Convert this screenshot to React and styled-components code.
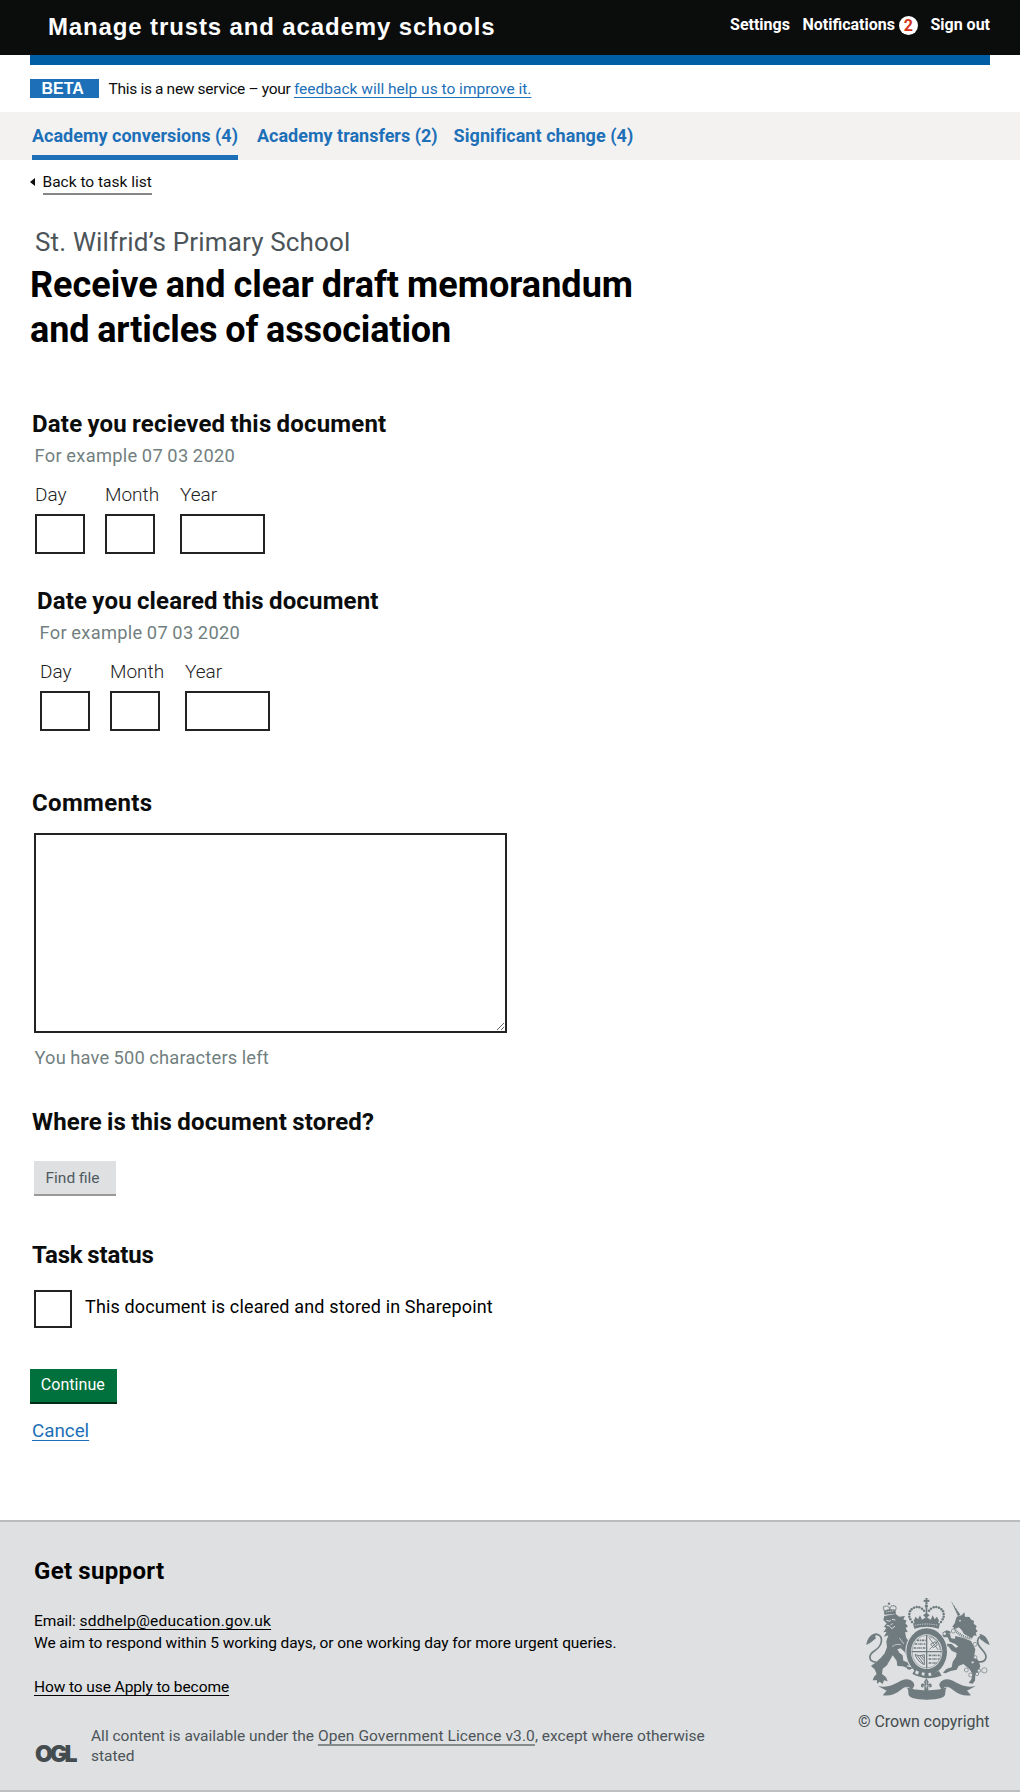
import React from 'react';
import styled, { createGlobalStyle, css } from 'styled-components';

const GlobalStyle = createGlobalStyle`
  *, *::before, *::after { box-sizing: border-box; }
  body { margin: 0; background: #fff; }
  h1, h2, p { margin: 0; }
`;

const Page = styled.div`
  width: 1020px;
  height: 1792px;
  display: flex;
  flex-direction: column;
  overflow: hidden;
  font-family: Roboto, "Liberation Sans", sans-serif;
  font-size: 15.5px;
  line-height: 20px;
  color: #0b0c0c;
`;

/* Header */
const Header = styled.header`
  display: flex;
  justify-content: space-between;
  align-items: flex-start;
  height: 55px;
  padding: 0 30px 0 48px;
  background: #0b0c0c;
  color: #fff;
`;

const ServiceName = styled.span`
  font: 700 24px/53px "Liberation Sans", Arial, sans-serif;
  letter-spacing: 0.87px;
  white-space: nowrap;
`;

const AccountNav = styled.nav`
  display: flex;
  align-items: center;
  gap: 12.5px;
  height: 50px;
  font-size: 16px;
  font-weight: 700;
`;

const AccountLink = styled.a`
  display: flex;
  align-items: center;
  gap: 4px;
`;

const Badge = styled.span`
  width: 19px;
  height: 19px;
  margin-top: 1px;
  border-radius: 50%;
  background: #fff;
  color: #d4351c;
  line-height: 20px;
  text-align: center;
`;

const BrandBar = styled.div`
  height: 10px;
  margin: 0 30px;
  background: #005ea5;
`;

/* Phase banner */
const PhaseBanner = styled.div`
  display: flex;
  align-items: flex-start;
  height: 47px;
  padding: 13.5px 30px 0;
  color: #0b0c0c;
`;

const PhaseTag = styled.strong`
  width: 69px;
  height: 19.5px;
  margin-right: 9.5px;
  padding-left: 11.5px;
  background: #1d70b8;
  color: #fff;
  font: 700 16px/20px "Liberation Sans", Arial, sans-serif;
`;

const PhaseText = styled.span`
  letter-spacing: -0.26px;
  word-spacing: -0.2px;
  white-space: pre;
`;

const TextLink = styled.a`
  color: ${p => p.$color || '#1d70b8'};
  letter-spacing: ${p => p.$track || 0}px;
  word-spacing: 0;
  text-decoration: underline;
  text-decoration-color: ${p => p.$line || 'currentColor'};
  text-decoration-thickness: ${p => p.$thick || 1}px;
  text-underline-offset: 3px;
  text-decoration-skip-ink: none;
`;

/* Section tabs */
const Tabs = styled.nav`
  display: flex;
  height: 48px;
  padding-left: 32px;
  background: #f3f2f1;
`;

const Tab = styled.a`
  height: 48px;
  margin-right: ${p => p.$gap || 0}px;
  color: #1d70b8;
  font-size: 18px;
  font-weight: 700;
  line-height: 47px;
  letter-spacing: ${p => p.$track || 0}px;
  ${p => p.$active && css`box-shadow: inset 0 -5px 0 #1d70b8;`}
`;

/* Main column */
const Main = styled.main`
  height: 1360px;
  padding: 11.5px 30px 0;
`;

const BackLink = styled.a`
  display: flex;
  align-items: flex-start;
  gap: 7.5px;
  width: max-content;

  svg { margin-top: 6.5px; }
  span {
    height: 23.5px;
    border-bottom: 2px solid #858688;
  }
`;

const Caption = styled.p`
  margin: 31px 0 5px 5px;
  color: #4c5458;
  font-size: 26px;
  line-height: 32px;
  letter-spacing: 0.16px;
`;

const Title = styled.h1`
  color: #000;
  font-size: 36px;
  line-height: 45px;
  letter-spacing: 0.02px;
  word-spacing: -1px;

  span { display: block; }
  span + span { letter-spacing: -0.12px; }
`;

const Section = styled.section`
  display: flex;
  flex-direction: column;
  align-items: flex-start;
  margin-top: ${p => p.$top}px;
  padding-left: ${p => p.$indent || 4}px;
`;

const Heading = styled.h2`
  margin-left: -2px;
  font-size: 24px;
  line-height: 30px;
  letter-spacing: ${p => p.$track || 0}px;
  word-spacing: -1px;
`;

const Hint = styled.p`
  margin: ${p => p.$top}px 0 0 0.5px;
  color: #727f80;
  font-size: 18.3px;
  line-height: 24px;
  letter-spacing: ${p => p.$track}px;
  word-spacing: -0.5px;
`;

const DateRow = styled.div`
  display: flex;
  padding-left: 1px;
  margin-top: 15.7px;
`;

const DateField = styled.label`
  display: flex;
  flex-direction: column;
  gap: 6.5px;
  width: ${p => p.$w}px;
  margin-right: ${p => p.$gap || 0}px;
  color: #222;
  font-size: 19px;
  font-weight: 300;
  line-height: 24px;
`;

const inputBox = css`
  appearance: none;
  display: block;
  margin: 0;
  padding: 0;
  border: 2px solid #222;
  border-radius: 0;
  background: #fff;
`;

const DateInput = styled.input`
  ${inputBox}
  width: 100%;
  height: 40px;
`;

const CommentBox = styled.textarea`
  ${inputBox}
  width: 473px;
  height: 200px;
  margin-top: 15.2px;
  resize: both;
`;

const Button = styled.button`
  appearance: none;
  display: flex;
  align-items: flex-start;
  width: ${p => p.$w}px;
  height: 35px;
  margin: ${p => p.$top}px 0 0;
  padding: ${p => p.$pad};
  border: 0;
  border-radius: 0;
  border-bottom: 2px solid ${p => (p.$primary ? '#002d18' : '#999')};
  background: ${p => (p.$primary ? '#00703c' : '#dee0e2')};
  color: ${p => (p.$primary ? '#fff' : '#505a5f')};
  font-family: inherit;
  font-size: ${p => (p.$primary ? 16 : 15.5)}px;
  line-height: 20px;
  letter-spacing: ${p => (p.$primary ? 0.05 : 0)}px;
`;

const CheckRow = styled.label`
  display: flex;
  gap: 13px;
  margin-top: 20.2px;
  color: #000;
  font-size: 18px;
  line-height: 33.6px;
  letter-spacing: 0.15px;
`;

const Checkbox = styled.input`
  ${inputBox}
  width: 38px;
  height: 38px;
`;

const Cancel = styled(TextLink)`
  display: inline-block;
  margin: 15.5px 0 0 2px;
  font-size: 18.8px;
  line-height: 24px;
`;

/* Footer */
const Footer = styled.footer`
  display: flex;
  justify-content: space-between;
  height: 272px;
  padding: 33.5px 26px 0 34px;
  border-top: 2px solid #b9bcbe;
  border-bottom: 2px solid #bcbec0;
  background: #dee0e2;
`;

const Support = styled.div`
  width: 700px;
  color: #000;
`;

const SupportHeading = styled.h2`
  margin: 0 0 24.2px;
  font-size: 24px;
  line-height: 30px;
  letter-spacing: 0.36px;
  word-spacing: -0.6px;
`;

const SupportLine = styled.p`
  line-height: 22px;
  letter-spacing: -0.07px;
  margin-bottom: ${p => p.$gap || 0}px;
`;

const Licence = styled.div`
  display: flex;
  gap: 14px;
  margin-top: 28.7px;
  color: #4c5458;
`;

const OglMark = styled.span`
  width: 43px;
  padding-top: 17.5px;
  padding-left: 1px;
  color: #454c4f;
  font: 900 23px/20px Inter, sans-serif;
  letter-spacing: -2.8px;
`;

const LicenceText = styled.div`
  width: 625px;
`;

const LicenceLine = styled.p`
  white-space: nowrap;
`;

const Copyright = styled.div`
  display: flex;
  flex-direction: column;
  width: 136px;
  padding-top: 38.5px;
  color: #454c4f;
  font-size: 16px;
  letter-spacing: -0.07px;

  svg { margin: 0 0 7.5px 4px; }
  span { white-space: nowrap; }
`;

const INK = '#6f7b7e';
const GROUND = '#dee0e2';

function RibbonHalf() {
  return (
    <>
      <path d="M48 276C78 284 98 270 120 259C140 250 158 262 157 275L148 290C142 274 132 276 116 288C98 302 82 307 62 304L74 290Z" />
      <path d="M133 279C144 285 170 289 195 289V317C158 317 142 310 140 303L138 286Z" />
    </>
  );
}

function Crest() {
  const crownDots = [
    [150, 84], [145, 76], [142, 68], [142, 60], [144, 52], [149, 46], [156, 41], [164, 39], [172, 40], [180, 44], [186, 50],
  ];
  return (
    <svg width="132" height="110" viewBox="0 0 396 330" fill={INK} aria-hidden="true">
      {/* central crown */}
      <path d="M190 12h7l-1 6 6-1v7l-6-1 1 7h-7l1-7-6 1v-7l6 1z" />
      <circle cx="193" cy="36" r="5" />
      {crownDots.map(([x, y]) => (
        <g key={`${x}-${y}`}>
          <circle cx={x} cy={y} r="3.8" />
          <circle cx={387 - x} cy={y} r="3.8" />
        </g>
      ))}
      <path d="M191 40h5v40h-5zM183 64l10-8 10 8-10 8zM155 80l6-12 7 8 6-12 6 13 13-8 13 8 6-13 6 12 7-8 6 12-3 8H158z" />
      <path d="M153 88q40-10 81 0l-4 16q-36-12-73 0z" />
      <path d="M159 94q35-8 69 0" fill="none" stroke={GROUND} strokeWidth="2.4" strokeDasharray="4 3" />
      {/* ribbon */}
      <RibbonHalf />
      <g transform="translate(389 0) scale(-1 1)"><RibbonHalf /></g>
      <path d="M193 252l7 12-3 8c8-8 15-2 11 7-5 3-7 0-8-2-2 4-2 7 0 9l-7 8-7-8c2-2 2-5 0-9-1 2-3 5-8 2-4-9 3-15 11-7l-3-8z" />
      <path d="M193 260v24M182 276h22" stroke={GROUND} strokeWidth="1.8" />
      {/* lion */}
      <path d="M67 62l-1-12q16-6 34-3l2 12z" />
      <path d="M67 50q-8-14 7-14 8 0 9 12 1-13 10-13 14 1 7 14" fill="none" stroke={INK} strokeWidth="3.5" strokeDasharray="4 1.5" />
      <path d="M72 54l24-4" fill="none" stroke={GROUND} strokeWidth="2.4" strokeDasharray="4 2" />
      <circle cx="81" cy="29" r="3.5" />
      <path d="M67 66L101 60L112 68L129 66L124 76L134 80L130 88L138 97L131 102L137 114L129 115L133 132L145 148L147 170L157 178L150 184L154 192L143 192L138 198L132 184L128 174L116 163L106 166L112 176L122 184L124 200L140 206L147 215L136 214L134 221L122 217L106 216L104 200L92 184L84 198L75 214L62 224L60 240L72 250L77 262L66 259L62 270L53 263L45 269L45 259L32 259L36 248L44 240L38 226L27 216L40 206L56 192L68 178L75 160L73 142L79 124L66 128L74 113L64 115L73 102L66 98L74 88L64 78Z" />
      <path d="M73 79l10 3 3-4M90 76l10 2M74 94l8 2 8 8 9-8M86 92l6-3" fill="none" stroke={GROUND} strokeWidth="3" />
      <path d="M90 158c11-8 19-8 28-5M78 206c8 12 5 25-9 28M112 132l14 18" fill="none" stroke={GROUND} strokeWidth="2.2" />
      <path d="M42 204C20 203 17 183 38 170C59 157 64 134 52 124C42 117 32 123 29 135" fill="none" stroke={INK} strokeWidth="5" />
      <path d="M13 153C15 136 26 117 45 119L39 126L42 133C34 139 29 146 13 153Z" />
      {/* unicorn */}
      <path d="M267 20L295 62L288 67Z" />
      <path d="M274 32l4-2M279 41l4-2M284 50l4-3" stroke={GROUND} strokeWidth="1.8" />
      <path d="M284 68L299 64L307 55L309 68L323 69L326 76L336 81L335 89L344 96L341 104L347 112L341 116L344 126L336 124L330 133L306 120L299 108L290 100L281 104L271 98L278 88Z" />
      <circle cx="294" cy="80" r="2.5" fill={GROUND} />
      <path d="M276 103q18 27 52 30" fill="none" stroke={INK} strokeWidth="8" strokeDasharray="3 3" />
      <path d="M280 126L304 132L327 141L340 166L337 184L350 202L355 216L349 234L340 244L339 260L332 269L320 267L329 254L330 238L323 226L304 210L290 216L284 227L266 231L250 238L243 236L253 225L269 220L272 204L282 188L284 177L269 170L259 157L248 160L252 149L269 150L281 161L289 158L280 150L263 143L257 130L245 130L240 124L252 116L264 120L267 132L278 135Z" />
      <path d="M240 117l14-8 10 3 3 6-17 2z" />
      <path d="M345 202C371 209 378 190 366 174C353 158 341 148 349 133C356 121 368 127 372 137" fill="none" stroke={INK} strokeWidth="5" />
      <path d="M383 153C379 138 369 121 352 120L356 127L353 134C362 139 368 147 383 153Z" />
      <g fill={GROUND} stroke={INK} strokeWidth="2">
        <circle cx="274" cy="111" r="6" />
        <circle cx="248" cy="119" r="5" />
        <circle cx="339" cy="151" r="6" />
        <circle cx="340" cy="190" r="5" />
        <circle cx="332" cy="205" r="4" />
        <circle cx="313" cy="228" r="6" />
        <circle cx="326" cy="243" r="6" />
        <circle cx="345" cy="240" r="5" />
        <circle cx="351" cy="230" r="5" />
        <circle cx="367" cy="229" r="8" />
      </g>
      {/* garter and shield */}
      <ellipse cx="194" cy="173" rx="64" ry="73" fill={GROUND} />
      <ellipse cx="194" cy="173" rx="61" ry="70" />
      <ellipse cx="194" cy="173" rx="47" ry="52" fill={GROUND} />
      <ellipse cx="194" cy="173" rx="44" ry="49" fill="none" stroke={INK} strokeWidth="1.5" />
      <path d="M194 123v100M149 173h90" stroke={INK} strokeWidth="4" />
      <g stroke={INK} strokeWidth="5" fill="none" strokeDasharray="7 2 3 2">
        <path d="M165 139h26M158 150h32M155 162h35M200 184h33M200 195h32M200 207h25" />
      </g>
      <path d="M200 130l29 38M230 139l-28 28M202 128c18 4 30 18 33 40M206 150l14-7 6 10-12 8z" fill="none" stroke={INK} strokeWidth="2.6" />
      <path d="M159 182q14 6 28 0v30q-18-6-28-30zM166 185l18 24M173 185l12 14M180 184l5 8" fill="none" stroke={INK} strokeWidth="3" />
      <path d="M159 226q36 25 72 5l8 14q-45 17-88-5z" />
      <path d="M162 229l9 4-4 9-8-4zM180 235l8 1-1 9-8-2zM199 237l8-1 1 9-8 1z" fill={GROUND} />
      <path d="M140 191l12 3-4 5 6 5-12 1zM133 217l20 4-9 6-9-2z" />
    </svg>
  );
}

function DateGroup({ name }) {
  return (
    <DateRow>
      <DateField $w={50} $gap={20}><span>Day</span><DateInput name={`${name}-day`} /></DateField>
      <DateField $w={50} $gap={25}><span>Month</span><DateInput name={`${name}-month`} /></DateField>
      <DateField $w={85}><span>Year</span><DateInput name={`${name}-year`} /></DateField>
    </DateRow>
  );
}

export default function App() {
  return (
    <Page>
      <GlobalStyle />
      <Header>
        <ServiceName>Manage trusts and academy schools</ServiceName>
        <AccountNav>
          <AccountLink>Settings</AccountLink>
          <AccountLink>Notifications <Badge>2</Badge></AccountLink>
          <AccountLink>Sign out</AccountLink>
        </AccountNav>
      </Header>
      <BrandBar />
      <PhaseBanner>
        <PhaseTag>BETA</PhaseTag>
        <PhaseText>
          {'This is a new service – your '}
          <TextLink>feedback will help us to improve it.</TextLink>
        </PhaseText>
      </PhaseBanner>
      <Tabs>
        <Tab $active $gap={19}>Academy conversions (4)</Tab>
        <Tab $gap={16}>Academy transfers (2)</Tab>
        <Tab $track={0.06}>Significant change (4)</Tab>
      </Tabs>

      <Main>
        <BackLink>
          <svg width="5" height="8" viewBox="0 0 5 8"><path d="M5 0v8L0 4z" fill="#0b0c0c" /></svg>
          <span>Back to task list</span>
        </BackLink>
        <Caption>St. Wilfrid’s Primary School</Caption>
        <Title>
          <span>Receive and clear draft memorandum</span>
          <span>and articles of association</span>
        </Title>

        <Section $top={55.8}>
          <Heading $track={0.19}>Date you recieved this document</Heading>
          <Hint $top={5} $track={0.3}>For example 07 03 2020</Hint>
          <DateGroup name="received" />
        </Section>

        <Section $top={31.8} $indent={9}>
          <Heading $track={0.17}>Date you cleared this document</Heading>
          <Hint $top={5} $track={0.3}>For example 07 03 2020</Hint>
          <DateGroup name="cleared" />
        </Section>

        <Section $top={56.8}>
          <Heading $track={0.35}>Comments</Heading>
          <CommentBox />
          <Hint $top={12.8} $track={0.2}>You have 500 characters left</Hint>
        </Section>

        <Section $top={37}>
          <Heading $track={0.18}>Where is this document stored?</Heading>
          <Button $w={82} $top={24.2} $pad="7.5px 0 0 11.5px">Find file</Button>
        </Section>

        <Section $top={43.8}>
          <Heading $track={-0.15}>Task status</Heading>
          <CheckRow>
            <Checkbox type="checkbox" />
            This document is cleared and stored in Sharepoint
          </CheckRow>
        </Section>

        <Button $primary $w={87} $top={41} $pad="6.5px 0 0 10.8px">Continue</Button>
        <Cancel>Cancel</Cancel>
      </Main>

      <Footer>
        <Support>
          <SupportHeading>Get support</SupportHeading>
          <SupportLine>Email: <TextLink $color="#000" $track={0.25}>sddhelp@education.gov.uk</TextLink></SupportLine>
          <SupportLine $gap={22}>
            We aim to respond within 5 working days, or one working day for more urgent queries.
          </SupportLine>
          <SupportLine><TextLink $color="#000" $track={-0.09}>How to use Apply to become</TextLink></SupportLine>
          <Licence>
            <OglMark>OGL</OglMark>
            <LicenceText>
              <LicenceLine>
                All content is available under the{' '}
                <TextLink $color="inherit" $line="#858a8d" $thick={2} $track={0.1}>Open Government Licence v3.0</TextLink>
                , except where otherwise
              </LicenceLine>
              <LicenceLine>stated</LicenceLine>
            </LicenceText>
          </Licence>
        </Support>
        <Copyright>
          <Crest />
          <span>© Crown copyright</span>
        </Copyright>
      </Footer>
    </Page>
  );
}
